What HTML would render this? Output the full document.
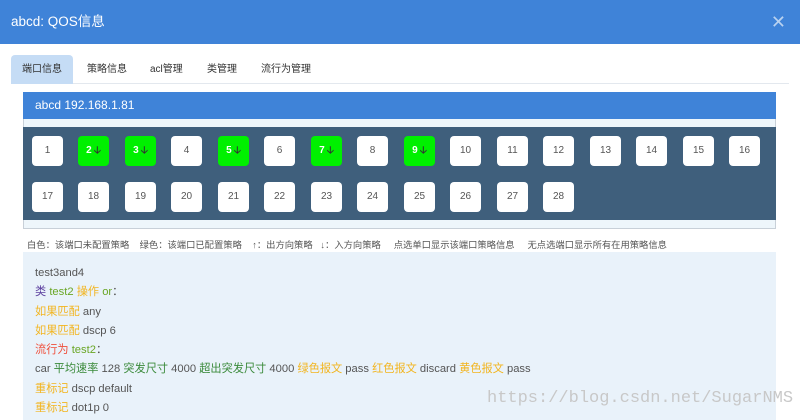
<!DOCTYPE html>
<html><head><meta charset="utf-8"><style>
*{margin:0;padding:0;box-sizing:border-box}
body{width:800px;height:420px;overflow:hidden;background:#fff;font-family:"Liberation Sans","Noto Sans CJK SC",sans-serif;position:relative}
.hdr{position:absolute;left:0;top:0;width:800px;height:44px;background:#3f83d8;color:#fff;font-size:13.5px;line-height:44px;padding-left:11px}
.x{position:absolute;right:14px;top:0;color:#b9d2f0;font-size:18px;line-height:44px}
.tabs{position:absolute;left:11px;top:55px;width:778px;height:29px;border-bottom:1px solid #e3e8ee}
.tab{position:absolute;top:0;height:29px;line-height:30px;font-size:10px;color:#333}
.tab.a{background:#c5dcf5;border-radius:4px 4px 0 0;width:62px;text-align:center;left:0}
.ph{position:absolute;left:23px;top:92px;width:753px;height:27px;background:#3f83d8;color:#fff;font-size:12px;line-height:27px;padding-left:12px}
.pb{position:absolute;left:23px;top:119px;width:753px;height:110px;background:#eef6fb;border:1px solid #c8d0d8;border-top:none}
.dk{position:absolute;left:23px;top:127px;width:753px;height:93px;background:#3f5f7c}
.b{position:absolute;width:31px;height:30px;background:#fff;border-radius:4px;font-size:10px;color:#555;text-align:center;line-height:30px}
.b.g{background:#00f000;color:#fff;font-weight:bold}
.b.g span{color:#333;margin-left:2px}
.leg{position:absolute;left:27px;top:237px;font-size:9.3px;color:#555;white-space:pre}
.info{position:absolute;left:23px;top:252px;width:753px;height:168px;background:#e9f2fa;padding:12px 0 0 12px;font-size:11.2px;line-height:19.3px;color:#555}
.p{color:#5b3d9e}.gr{color:#6aa625}.y{color:#f2b520}.r{color:#ef4e3a}.dg{color:#3a8a3a}
.wm{position:absolute;left:487px;top:389px;font-family:"Liberation Mono",monospace;font-size:17px;color:#c8c8c8}
</style></head><body>
<div class="hdr">abcd: QOS信息<span class="x">✕</span></div>
<div class="tabs">
<div class="tab a">端口信息</div>
<div class="tab" style="left:76px">策略信息</div>
<div class="tab" style="left:139px">acl管理</div>
<div class="tab" style="left:196px">类管理</div>
<div class="tab" style="left:250px">流行为管理</div>
</div>
<div class="pb"></div>
<div class="ph">abcd 192.168.1.81</div>
<div class="dk"></div>
<div id="btns"></div>
<div class="leg">白色：该端口未配置策略    绿色：该端口已配置策略    ↑：出方向策略   ↓：入方向策略     点选单口显示该端口策略信息     无点选端口显示所有在用策略信息</div>
<div class="info">
test3and4<br>
<span class="p">类</span> <span class="gr">test2</span> <span class="y">操作</span> <span class="gr">or</span>：<br>
<span class="y">如果匹配</span> any<br>
<span class="y">如果匹配</span> dscp 6<br>
<span class="r">流行为</span> <span class="gr">test2</span>：<br>
car <span class="dg">平均速率</span> 128 <span class="dg">突发尺寸</span> 4000 <span class="dg">超出突发尺寸</span> 4000 <span class="y">绿色报文</span> pass <span class="y">红色报文</span> discard <span class="y">黄色报文</span> pass<br>
<span class="y">重标记</span> dscp default<br>
<span class="y">重标记</span> dot1p 0
</div>
<div class="wm">https://blog.csdn.net/SugarNMS</div>
<script>
var h='',g=[2,3,5,7,9];
for(var i=1;i<=28;i++){var r=i<=16?0:1,c=r?i-17:i-1;var x=Math.round(32+c*46.47),y=r?182:136;
var gg=g.indexOf(i)>=0;h+='<div class="b'+(gg?' g':'')+'" style="left:'+x+'px;top:'+y+'px">'+i+(gg?'<span>🡣</span>':'')+'</div>';}
document.getElementById('btns').innerHTML=h;
</script>
</body></html>
